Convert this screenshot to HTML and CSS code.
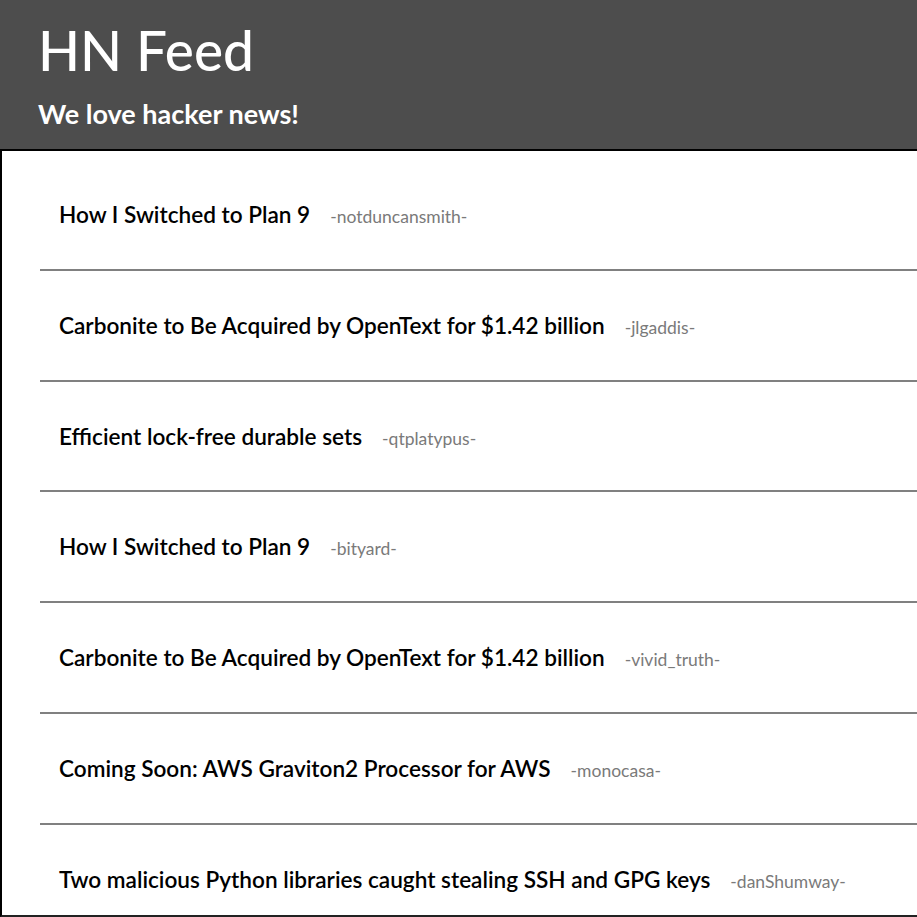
FILE: index.html
```html
<!DOCTYPE html>
<html lang="en">
<head>
<meta charset="utf-8">
<title>HN Feed</title>
<link rel="stylesheet" href="styles.css">
</head>
<body>
<header class="hero">
  <h1 class="hero-title">HN Feed</h1>
  <h2 class="hero-sub">We love hacker news!</h2>
</header>
<main class="feed">
  <ul class="feed-list">
    <li class="story"><span class="story-title">How I Switched to Plan 9</span><span class="story-author">-notduncansmith-</span></li>
    <li class="story"><span class="story-title">Carbonite to Be Acquired by OpenText for $1.42 billion</span><span class="story-author">-jlgaddis-</span></li>
    <li class="story"><span class="story-title">Efficient lock-free durable sets</span><span class="story-author">-qtplatypus-</span></li>
    <li class="story"><span class="story-title">How I Switched to Plan 9</span><span class="story-author">-bityard-</span></li>
    <li class="story"><span class="story-title">Carbonite to Be Acquired by OpenText for $1.42 billion</span><span class="story-author">-vivid_truth-</span></li>
    <li class="story"><span class="story-title">Coming Soon: AWS Graviton2 Processor for AWS</span><span class="story-author">-monocasa-</span></li>
    <li class="story"><span class="story-title">Two malicious Python libraries caught stealing SSH and GPG keys</span><span class="story-author">-danShumway-</span></li>
  </ul>
</main>
</body>
</html>
```
FILE: styles.css
```css
html, body {
  margin: 0;
  padding: 0;
  background: #ffffff;
  font-family: Lato, "Open Sans", Arial, sans-serif;
  overflow: hidden;
}

.hero {
  background: #4d4d4d;
  color: #ffffff;
  height: 149px;
  box-sizing: border-box;
  padding: 18px 0 0 38px;
}

.hero-title {
  margin: 0;
  font-size: 55px;
  font-weight: 500;
  line-height: 64px;
}

.hero-sub {
  margin: 17px 0 0 0;
  font-size: 27px;
  font-weight: 700;
  line-height: 30px;
}

.feed {
  border-top: 2px solid #000000;
  border-left: 2px solid #000000;
  border-bottom: 2px solid #222222;
  height: 764px;
  overflow: hidden;
}

.feed-list {
  list-style: none;
  margin: 0;
  padding: 9px 0 0 38px;
}

.story {
  display: flex;
  align-items: baseline;
  height: 24px;
  padding: 43px 0 41.8px 19px;
  line-height: 24px;
  border-bottom: 2px solid #808080;
}

.story-title {
  font-size: 22.6px;
  font-weight: 600;
  color: #000000;
  white-space: nowrap;
}

.story-author {
  margin-left: 20px;
  font-size: 17.5px;
  color: #7a7a7a;
  white-space: nowrap;
}
```
